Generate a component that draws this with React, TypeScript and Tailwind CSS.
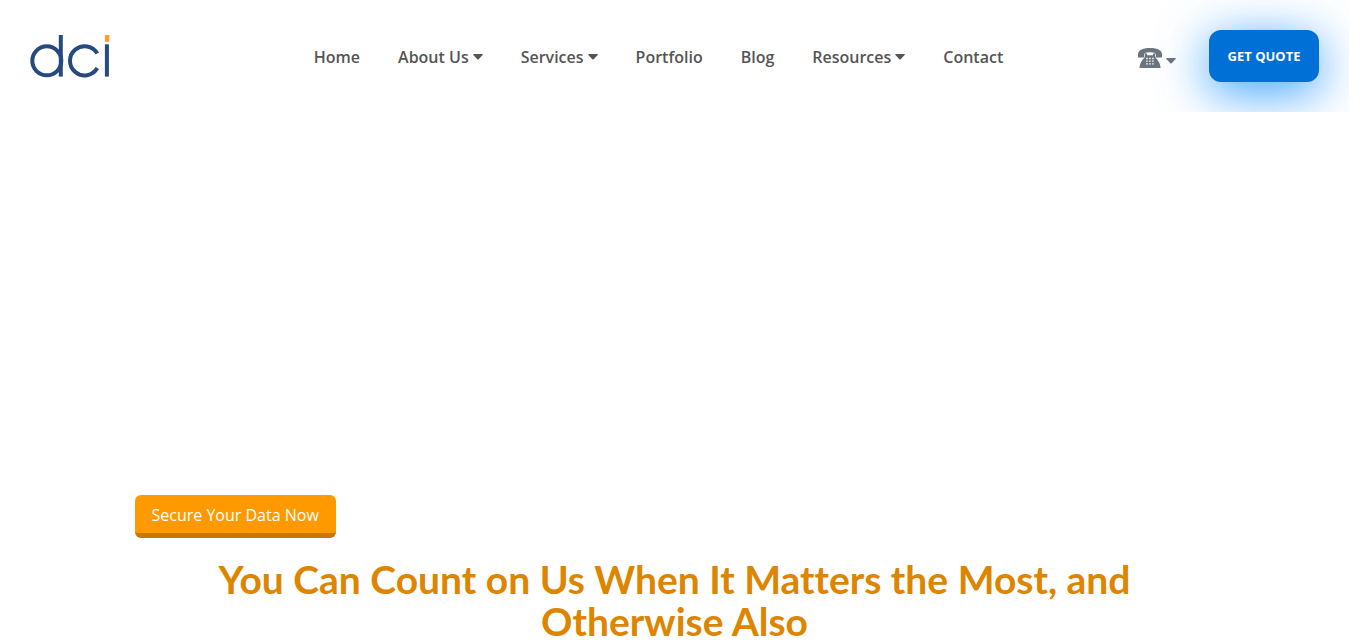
const navItems = [
  { label: "Home" },
  { label: "About Us", menu: true },
  { label: "Services", menu: true },
  { label: "Portfolio" },
  { label: "Blog" },
  { label: "Resources", menu: true },
  { label: "Contact" },
];

function Caret() {
  return (
    <svg viewBox="0 0 10 6" className="h-[6px] w-[10px] shrink-0" fill="currentColor" aria-hidden="true">
      <path d="M.8 0h8.4q1.100 0 .4 .9L5.700 5.200q-.7 .7-1.400 0L.4 .9Q-.3 0 .8 0Z" />
    </svg>
  );
}

function Logo() {
  return (
    <svg viewBox="0 0 80 44" className="h-11 w-20" aria-hidden="true">
      <g fill="none" stroke="#264a7f" strokeWidth="4">
        <circle cx="16.800" cy="26.800" r="14.500" />
        <path d="M30.800 1v41.600" />
        <path d="M67.300 19.600A14.600 14.600 0 1 0 67.300 34" />
        <path d="M76.900 10.300v32.300" />
      </g>
      <path fill="#ff9d2e" d="M74.900 1h4.400v6.800h-4.400z" />
    </svg>
  );
}

function Phone() {
  return (
    <svg viewBox="0 0 26 22" className="h-[22px] w-[26px]" aria-hidden="true">
      <g fill="#6c757d">
        <path d="M1 10.500V7.500C1 3.500 5 1 13 1s12 2.500 12 6.500v3h-6.200V7.700C18.800 6 17 5.200 13 5.200S7.200 6 7.200 7.700v2.800Z" />
        <path d="M8 6.600h2v1.700h6V6.600h2v2.200c0 2 1.600 2.600 3.200 5.200 1.600 2.600 2.300 4.600 2.300 7H2.500c0-2.400.7-4.400 2.300-7C6.400 11.400 8 10.800 8 8.800Z" />
      </g>
      <path
        stroke="#fff"
        strokeWidth="1.300"
        strokeDasharray="1.500 1.500"
        d="M9.200 11.500h7.500M9.200 14.200h7.500M9.200 16.900h7.500"
      />
    </svg>
  );
}

export default function App() {
  return (
    <div className="bg-white pr-[17px] font-['Open_Sans',sans-serif] text-base">
      <header className="flex h-28 items-center justify-between overflow-hidden bg-white px-[30px]">
        <a href="#home" aria-label="dci" className="w-[284px]">
          <Logo />
        </a>
        <nav aria-label="Main" className="pt-0.5">
          <ul className="flex items-center gap-[38px] font-semibold text-[#555]">
            {navItems.map(({ label, menu }) => (
              <li key={label}>
                <a href="#" className="flex items-center gap-1 whitespace-nowrap">
                  {label}
                  {menu && <Caret />}
                </a>
              </li>
            ))}
          </ul>
        </nav>
        <div className="flex w-[316px] items-center justify-end gap-[33px]">
          <button type="button" aria-label="Call us" className="flex items-center gap-[3px] pt-1 text-[#6c757d]">
            <Phone />
            <span className="pt-1.5">
              <Caret />
            </span>
          </button>
          <button
            type="button"
            className="h-[52px] w-[110px] rounded-xl bg-[#0070d7] pt-0.5 text-[13px] font-bold text-white shadow-[0_10px_50px_#0084ffcc]"
          >
            GET QUOTE
          </button>
        </div>
      </header>
      <main className="mx-auto max-w-[1112px] px-4 pt-[383px]">
        <a
          href="#secure"
          className="inline-block rounded-md border-b-[5px] border-[#c97700] bg-[#ff9900] px-[17px] pt-2 pb-1.5 text-white"
        >
          Secure Your Data Now
        </a>
        <h1 className="mt-5 text-center font-['Lato',sans-serif] text-[39px] leading-[42px] font-bold text-[#de8500] [font-variant-ligatures:none]">
          You Can Count on Us When It Matters the Most, and Otherwise Also
        </h1>
      </main>
    </div>
  );
}
